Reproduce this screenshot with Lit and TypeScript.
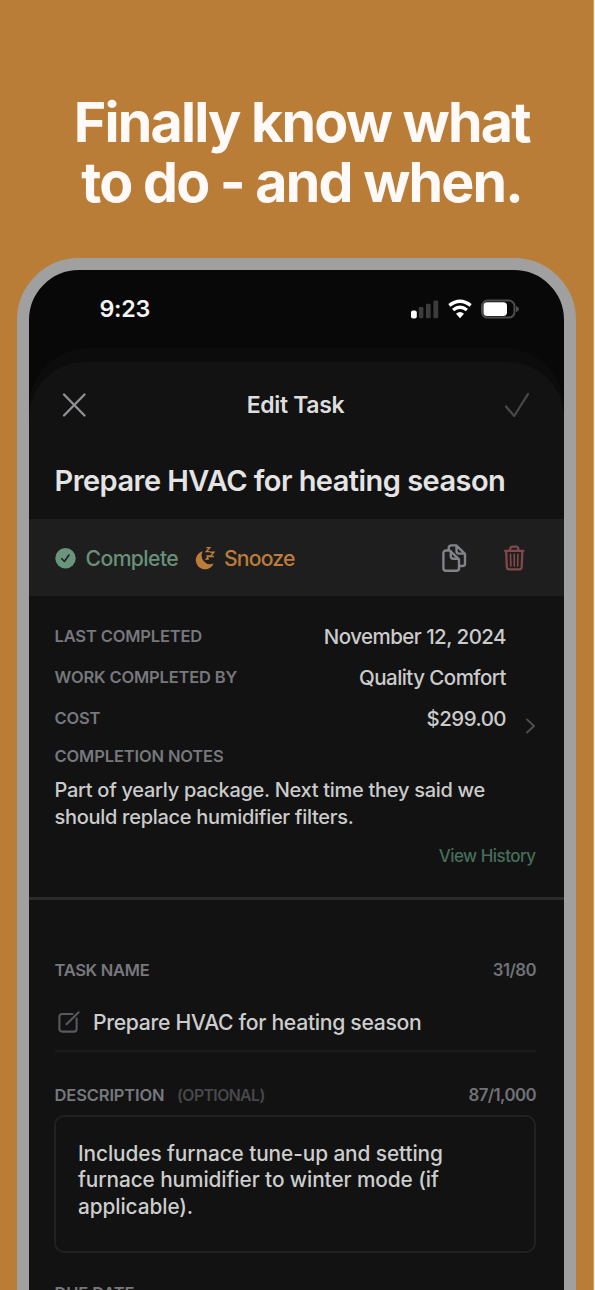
import { LitElement, html, css } from 'lit';
import { customElement, property } from 'lit/decorators.js';

@customElement('status-bar')
class StatusBar extends LitElement {
  static styles = css`
    :host { display: flex; justify-content: space-between; align-items: center; height: 78px; padding: 0 44px 0 70.5px; }
    .time { color: #f4f4f4; font-size: 23.3px; font-weight: 600; line-height: 30px; letter-spacing: -.3px; }
    svg { display: block; }
  `;
  render() {
    return html`
      <div class="time">9:23</div>
      <svg width="110" height="24" viewBox="0 0 110 24">
        <rect x="1" y="13.600" width="5.800" height="8" rx="2" fill="#fff" />
        <g fill="#3c3c3c">
          <rect x="8.800" y="10" width="4.600" height="11.200" rx="1.200" />
          <rect x="16" y="6.800" width="4.600" height="14.400" rx="1.200" />
          <rect x="23.400" y="3.400" width="4.800" height="17.800" rx="1.200" />
        </g>
        <g fill="none" stroke="#fff" stroke-width="3.300">
          <path d="M39.300 8.400 Q50 0 60.700 8.400" />
          <path d="M43.100 13 Q50 7.400 56.900 13" />
        </g>
        <path d="M46 16.700 Q50 13.200 54 16.700 L50 21.200 Z" fill="#fff" />
        <rect x="72" y="3.600" width="32.500" height="17" rx="5.600" fill="none" stroke="#4c4c4c" stroke-width="2" />
        <rect x="73.500" y="5.300" width="23.500" height="13.600" rx="3.600" fill="#fff" />
        <path d="M106 8.900 q3.200 1.200 3.200 3.200 t-3.200 3.200z" fill="#4c4c4c" />
      </svg>
    `;
  }
}

@customElement('detail-row')
class DetailRow extends LitElement {
  @property() label = '';
  @property() value = '';
  static styles = css`
    :host { display: flex; justify-content: space-between; align-items: center; height: 41.200px; }
    .label { color: #77787e; font-size: 16.500px; font-weight: 600; letter-spacing: -.160px; }
    .value { color: #cbcbcb; font-size: 20.500px; letter-spacing: -.550px; font-weight: 480; }
  `;
  render() {
    return html`<span class="label">${this.label}</span><span class="value">${this.value}</span>`;
  }
}

@customElement('app-root')
class AppRoot extends LitElement {
  static styles = css`
    :host { display: block; width: 595px; height: 1290px; overflow: hidden; font-family: Inter, sans-serif; background: #fdeedd; white-space: nowrap; }
    * { box-sizing: border-box; }
    svg { display: block; flex: none; overflow: visible; }
    .poster { width: 594px; height: 1290px; background: #b97d37; border-right: 1px solid #cf9f6a; padding: 92px 0 0 17px; overflow: hidden; }
    h1 { margin: 0; width: 560px; height: 165.500px; padding-left: 9.500px; color: #fffaf8; font-size: 55.500px; line-height: 60.300px; font-weight: 700; letter-spacing: -1.780px; text-align: center; }
    .phone { width: 559px; height: 1100px; border: 12.500px solid #a0a0a0; border-radius: 62px; background: #080808; overflow: hidden; }
    .back { height: 60px; border-radius: 66px 66px 0 0; background: #0c0c0c; padding-top: 14px; }
    .sheet { height: 1000px; border-radius: 56px 56px 0 0; background: #121212; }
    .nav { display: flex; align-items: center; justify-content: space-between; height: 87px; padding: 0 35px 0 33px; }
    .nav b { color: #dedede; font-size: 23px; font-weight: 600; letter-spacing: -.360px; }
    .title { height: 70.500px; padding: 1px 0 0 25.500px; color: #e4e4e4; font-size: 29px; font-weight: 600; line-height: 62px; letter-spacing: -.540px; }
    .actions { display: flex; align-items: center; height: 76.500px; padding: 2px 40px 0 26px; background: #1e1e1e; font-size: 21.200px; font-weight: 550; letter-spacing: -.600px; }
    .done { color: #68917a; width: 120px; padding-left: 9.500px; }
    .snooze { color: #bd7c39; flex: 1; padding-left: 8px; letter-spacing: -.840px; }
    .actions .gap { margin-right: 37.500px; }
    .history { padding: 20px 27.500px 0 25.500px; height: 301.500px; }
    .summary { display: flex; align-items: flex-start; height: 225px; }
    .rows { flex: 1; }
    .chev { margin: 102.500px 2px 0 19.500px; }
    .label { color: #77787e; font-size: 16.500px; font-weight: 600; letter-spacing: -.130px; line-height: 34px; }
    .notes { margin: 3.500px 0 0; color: #cbcbcb; font-size: 20px; font-weight: 480; letter-spacing: -.290px; line-height: 27.400px; }
    .link { color: #456e5b; font-size: 17px; font-weight: 520; letter-spacing: -.540px; text-align: right; line-height: 30px; padding-right: 1px; }
    .rule { height: 3px; background: #2a2a2b; }
    .form { padding: 52.500px 28px 0 25.500px; }
    .head { display: flex; justify-content: space-between; align-items: center; }
    .tight { letter-spacing: -.300px; }
    .count { color: #717277; font-size: 16.800px; font-weight: 600; letter-spacing: -.550px; }
    .opt { color: #47484b; font-size: 15.800px; letter-spacing: -.580px; margin-left: 12.500px; font-weight: 580; }
    .field { display: flex; align-items: center; gap: 13px; height: 65px; padding: 7px 0 0 3.500px; border-bottom: 2px solid #1b1b1c; color: #cdcdcd; font-size: 21.200px; font-weight: 480; letter-spacing: -.320px; }
    .second { margin-top: 26px; }
    .box { height: 138px; margin: 3px 0 0 -.5px; padding: 24.500px 22px; border: 2px solid #212122; border-radius: 10px; color: #cdcdcd; font-size: 20.800px; font-weight: 480; line-height: 26.300px; letter-spacing: -.080px; }
    .due { margin-top: 24.500px; line-height: 32px; }
  `;

  render() {
    return html`
      <div class="poster">
        <h1>Finally know what<br />to do - and when.</h1>
        <div class="phone">
          <status-bar></status-bar>
          <div class="back">
            <div class="sheet">
              <div class="nav">
                <svg width="24" height="24" viewBox="0 0 24 24" fill="none" stroke="#8f9094" stroke-width="2.400" stroke-linecap="round"><path d="M2 1.500 22.500 22.500M22.500 1.500 2 22.500" /></svg>
                <b>Edit Task</b>
                <svg width="24" height="24" viewBox="0 0 24 24" fill="none" stroke="#47484a" stroke-width="2.300" stroke-linecap="round" stroke-linejoin="round"><path d="M1 13.500 9.200 23 23 1" /></svg>
              </div>
              <div class="title">Prepare HVAC for heating season</div>
              <div class="actions">
                <svg width="21" height="21" viewBox="0 0 21 21"><circle cx="10.500" cy="10.200" r="10.200" fill="#6a947d" /><path d="M6.800 10.700 9.400 13.500 14 7" fill="none" stroke="#1e1e1e" stroke-width="1.600" stroke-linecap="round" stroke-linejoin="round" /></svg>
                <span class="done">Complete</span>
                <svg width="20" height="24" viewBox="0 0 20 24"><path d="M6.800 5.200 A9.200 9.200 0 1 0 17.600 17.400 A8.600 8.600 0 0 1 6.800 5.200Z" fill="#bd7c39" /><path d="M10.300 1.600h3.500l-3.500 4h3.500M14.200 6.200h3.700l-3.700 4.300h3.700M10.300 10h2.600l-2.600 3h2.600" fill="none" stroke="#bd7c39" stroke-width="1.400" /></svg>
                <span class="snooze">Snooze</span>
                <svg class="gap" width="24" height="28" viewBox="0 0 24 28" fill="none" stroke="#828389" stroke-width="2.400" stroke-linejoin="round"><path d="M4 6.500h3.800L17 15.300v8.900a2.600 2.600 0 0 1-2.600 2.600H4a2.600 2.600 0 0 1-2.600-2.600V9.100A2.600 2.600 0 0 1 4 6.500z" /><path d="M8.800 6.500v5.800a2.500 2.500 0 0 0 2.500 2.500H17M6.700 6.300V4a2.600 2.600 0 0 1 2.600-2.600h5L23 9.800v9.600a2.600 2.600 0 0 1-2.600 2.600H17M14.500 1.500v5.600a2.500 2.500 0 0 0 2.500 2.500h5.800" /></svg>
                <svg width="20.500" height="26" viewBox="0 0 21 26" fill="none" stroke="#83484c" stroke-width="2.300" stroke-linecap="round" stroke-linejoin="round"><path d="M1 5.600h19M2.200 5.800l.7 16.400a2.600 2.600 0 0 0 2.600 2.500h10a2.600 2.600 0 0 0 2.600-2.500l.7-16.400M6.300 5.300V4a2.600 2.600 0 0 1 2.600-2.600h3.200A2.600 2.600 0 0 1 14.700 4v1.300" /><path stroke-width="1.700" d="M6.700 9.200l.3 12M10.500 9.200v12M14.300 9.200l-.3 12" /></svg>
              </div>
              <div class="history">
                <div class="summary">
                  <div class="rows">
                    <detail-row label="LAST COMPLETED" value="November 12, 2024"></detail-row>
                    <detail-row label="WORK COMPLETED BY" value="Quality Comfort"></detail-row>
                    <detail-row label="COST" value="$299.00"></detail-row>
                    <div class="label">COMPLETION NOTES</div>
                    <p class="notes">Part of yearly package. Next time they said we<br />should replace humidifier filters.</p>
                  </div>
                  <svg class="chev" width="9" height="16" viewBox="0 0 9 16" fill="none" stroke="#4d4e51" stroke-width="1.900" stroke-linecap="round" stroke-linejoin="round"><path d="M1 1.500 8 8 1 14.500" /></svg>
                </div>
                <div class="link">View History</div>
              </div>
              <div class="rule"></div>
              <div class="form">
                <div class="head"><span class="label tight">TASK NAME</span><span class="count">31/80</span></div>
                <div class="field">
                  <svg width="22" height="24" viewBox="0 0 22 24" fill="none" stroke="#58595c" stroke-width="2.100" stroke-linecap="round"><path d="M14.500 4H4a2.600 2.600 0 0 0-2.600 2.600V19A2.600 2.600 0 0 0 4 21.600h12A2.600 2.600 0 0 0 18.600 19V8.500M8.500 14.300 20.600 2.300" /></svg>
                  <span>Prepare HVAC for heating season</span>
                </div>
                <div class="head second"><span><span class="label">DESCRIPTION</span><span class="opt">(OPTIONAL)</span></span><span class="count">87/1,000</span></div>
                <div class="box">Includes furnace tune-up and setting<br />furnace humidifier to winter mode (if<br />applicable).</div>
                <div class="label due">DUE DATE</div>
              </div>
            </div>
          </div>
        </div>
      </div>
    `;
  }
}
